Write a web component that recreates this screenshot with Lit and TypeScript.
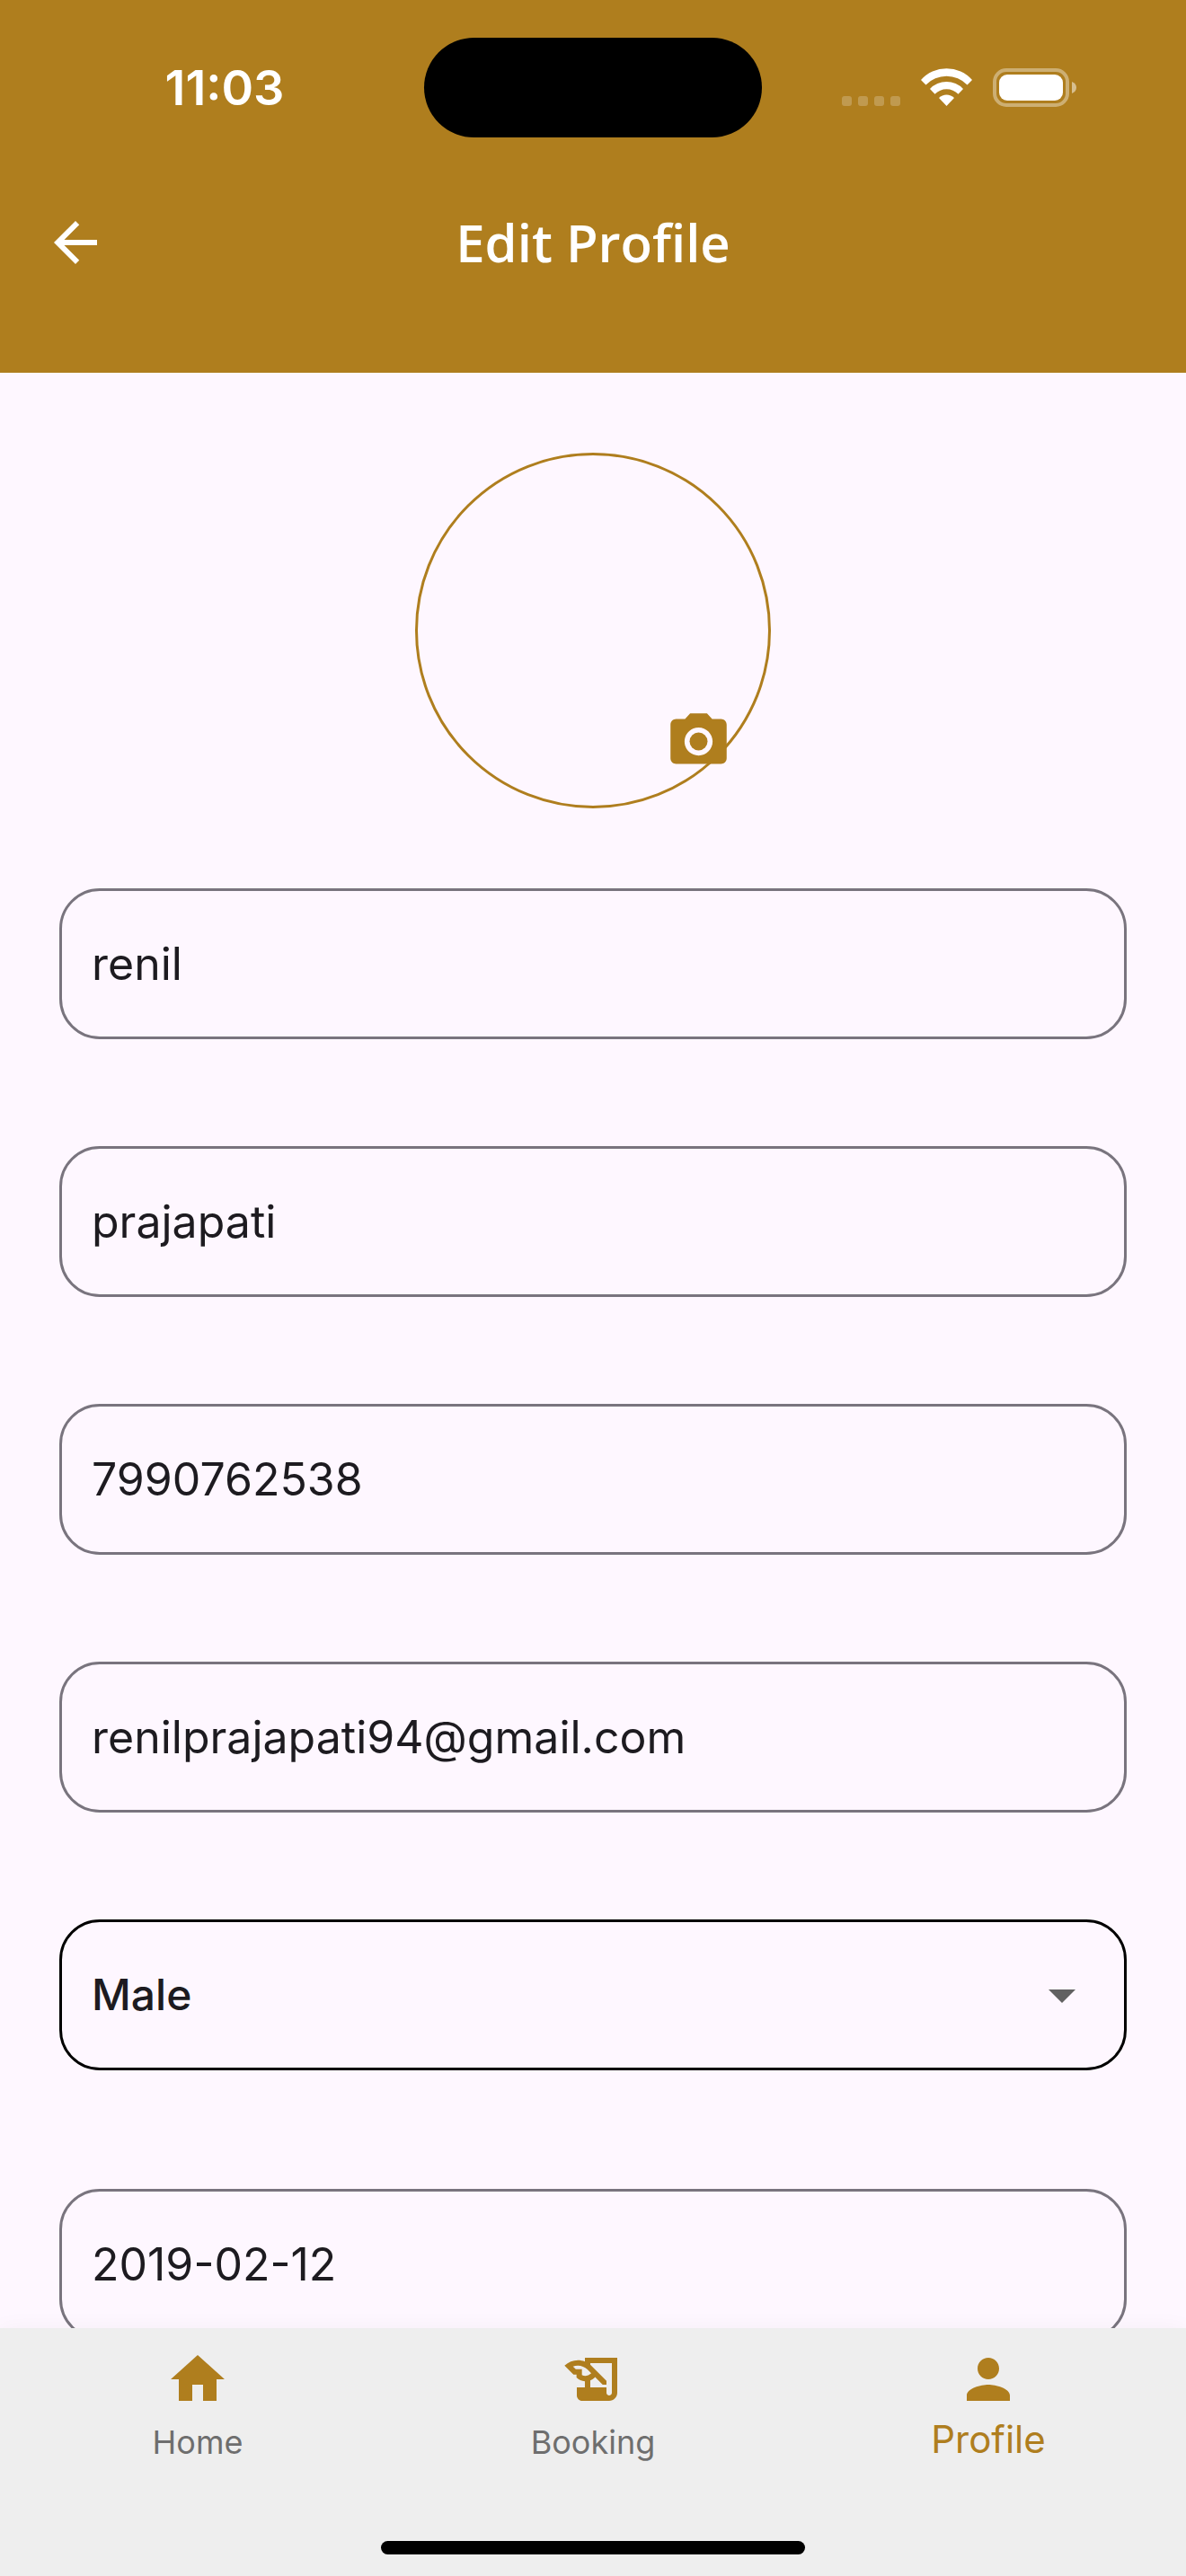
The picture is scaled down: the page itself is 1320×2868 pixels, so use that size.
import { LitElement, html, css, svg, nothing } from "lit";
import { customElement, property, state } from "lit/decorators.js";
import { classMap } from "lit/directives/class-map.js";

const ICONS = {
  back: svg`<path d="M20 11H7.83l5.59-5.59L12 4l-8 8 8 8 1.41-1.41L7.83 13H20v-2z"/>`,
  camera: svg`<circle cx="12" cy="12" r="3.2"/><path d="M9 2L7.17 4H4c-1.1 0-2 .9-2 2v12c0 1.1.9 2 2 2h16c1.1 0 2-.9 2-2V6c0-1.1-.9-2-2-2h-3.17L15 2H9zm3 15c-2.76 0-5-2.24-5-5s2.24-5 5-5 5 2.24 5 5-2.24 5-5 5z"/>`,
  down: svg`<path d="M7 10l5 5 5-5z"/>`,
  home: svg`<path d="M10 20v-6h4v6h5v-8h3L12 3 2 12h3v8z"/>`,
  booking: svg`<path d="M9 4v1.38c-.83-.33-1.72-.5-2.61-.5-1.79 0-3.58.68-4.95 2.05l3.33 3.33h1.11v1.11c.86.86 1.98 1.31 3.11 1.36V15H6v3c0 1.1.9 2 2 2h10c1.66 0 3-1.34 3-3V4H9zm-1.11 6.41V8.26H5.61L4.57 7.22a5.07 5.07 0 0 1 1.82-.34c1.34 0 2.59.52 3.54 1.46l1.41 1.41-.2.2a2.7 2.7 0 0 1-1.92.8c-.47 0-.93-.12-1.33-.34zM19 17c0 .55-.45 1-1 1s-1-.45-1-1v-2h-6v-2.59c.57-.23 1.1-.57 1.56-1.03l.2-.2L15.59 14H17v-1.41l-6-5.97V6h8v11z"/>`,
  profile: svg`<path d="M12 12c2.21 0 4-1.79 4-4s-1.79-4-4-4-4 1.79-4 4 1.79 4 4 4zm0 2c-2.67 0-8 1.34-8 4v2h16v-2c0-2.66-5.33-4-8-4z"/>`,
};

type IconName = keyof typeof ICONS;

const icon = (name: IconName) =>
  html`<svg class="icon" viewBox="0 0 24 24" aria-hidden="true">${ICONS[name]}</svg>`;

@customElement("status-bar")
export class StatusBar extends LitElement {
  @property() time = "";

  static styles = css`
    :host {
      display: grid;
      grid-template-columns: 1fr 376px 1fr;
      align-items: center;
      padding-top: 42px;
    }
    .time {
      padding-left: 28px;
      text-align: center;
      font-size: 54px;
      font-weight: 600;
      line-height: 64px;
    }
    .island {
      height: 111px;
      border-radius: 56px;
      background: #000;
    }
    .signals {
      display: flex;
      justify-content: flex-end;
      gap: 23px;
      padding-right: 122px;
    }
    .signals svg {
      display: block;
      fill: #fff;
    }
  `;

  render() {
    return html`
      <time class="time">${this.time}</time>
      <div class="island"></div>
      <div class="signals">
        <svg width="65" height="43" viewBox="0 0 65 43" aria-hidden="true">
          <g opacity="0.22">
            ${[0, 18, 36, 54].map((x) => svg`<rect x=${x} y="31" width="11" height="11" rx="3"/>`)}
          </g>
        </svg>
        <svg width="57" height="43" viewBox="0 0 57 43" aria-hidden="true">
          <path d="M0 13A38 38 0 0 1 57 13L51.5 18.5A32 32 0 0 0 5.5 18.5Z"/>
          <path d="M10 23A25.5 25.5 0 0 1 47 23L41.5 28.7A18.5 18.5 0 0 0 15.5 28.7Z"/>
          <path d="M20 33A12 12 0 0 1 37 33L28.5 42Z"/>
        </svg>
        <svg width="93" height="43" viewBox="0 0 93 43" aria-hidden="true">
          <rect x="2" y="2" width="81" height="39" rx="13" fill="none" stroke="#fff" stroke-width="4" opacity="0.38"/>
          <rect x="7" y="7" width="71" height="29" rx="9"/>
          <path d="M88 15c3.500 1.200 5 3.800 5 6.500s-1.500 5.300-5 6.500z" opacity="0.5"/>
        </svg>
      </div>
    `;
  }
}

interface Field {
  name: string;
  label: string;
  value: string;
  type?: string;
  options?: string[];
}

const FIELDS: Field[] = [
  { name: "first", label: "First name", value: "renil" },
  { name: "last", label: "Last name", value: "prajapati" },
  { name: "phone", label: "Phone number", value: "7990762538", type: "tel" },
  { name: "email", label: "Email", value: "renilprajapati94@gmail.com", type: "email" },
  { name: "gender", label: "Gender", value: "Male", options: ["Male", "Female", "Other"] },
  { name: "birth", label: "Date of birth", value: "2019-02-12" },
];

const TABS: { id: IconName; label: string }[] = [
  { id: "home", label: "Home" },
  { id: "booking", label: "Booking" },
  { id: "profile", label: "Profile" },
];

@customElement("app-root")
export class AppRoot extends LitElement {
  @state() private tab: IconName = "profile";

  static styles = css`
    :host {
      --gold: #af7e1e;
      --surface: #fef7ff;
      --ink: #1d1b20;
      display: flex;
      flex-direction: column;
      height: 100vh;
      background: var(--surface);
      color: var(--ink);
      font-family: Inter, "Liberation Sans", sans-serif;
    }
    * {
      box-sizing: border-box;
    }
    button {
      padding: 0;
      border: 0;
      background: none;
      color: inherit;
      cursor: pointer;
    }
    .icon {
      display: block;
      width: 72px;
      height: 72px;
      fill: currentColor;
    }
    .header {
      flex: none;
      background: var(--gold);
      color: #fff;
    }
    .toolbar {
      display: grid;
      grid-template-columns: 72px 1fr 72px;
      align-items: center;
      padding: 81px 48px 109px;
    }
    .title {
      margin: 0;
      text-align: center;
      font-family: "Open Sans", sans-serif;
      font-size: 58px;
      font-weight: 600;
      line-height: 72px;
    }
    .content {
      flex: 1;
      min-height: 0;
      overflow-y: auto;
      scrollbar-width: none;
      padding: 89px 66px;
    }
    .avatar {
      position: relative;
      width: 396px;
      height: 396px;
      margin: 0 auto 89px;
      border: 3px solid var(--gold);
      border-radius: 50%;
    }
    .camera {
      position: absolute;
      right: 40px;
      bottom: 34px;
      color: var(--gold);
    }
    .camera .icon {
      width: 75px;
      height: 75px;
    }
    .form {
      display: flex;
      flex-direction: column;
      gap: 119px;
    }
    .field {
      display: grid;
      align-items: center;
    }
    .control {
      grid-area: 1 / 1;
      width: 100%;
      height: 168px;
      margin: 0;
      padding: 0 33px;
      border: 3px solid #79747e;
      border-radius: 45px;
      outline: none;
      background: transparent;
      color: inherit;
      font-family: inherit;
      font-size: 50px;
      font-weight: 400;
      line-height: 72px;
    }
    .choice {
      margin-bottom: 13px;
    }
    .choice .control {
      appearance: none;
      border-color: #000;
      font-size: 48px;
      font-weight: 500;
    }
    .choice .icon {
      grid-area: 1 / 1;
      justify-self: end;
      margin-right: 36px;
      color: #616161;
      pointer-events: none;
    }
    .footer {
      position: relative;
      flex: none;
      padding: 21px 0 24px;
      background: #eee;
      box-shadow: 0 0 24px rgba(0, 0, 0, 0.04);
    }
    .tabs {
      display: grid;
      grid-template-columns: repeat(3, 1fr);
      margin-bottom: 84px;
    }
    .tab {
      display: flex;
      flex-direction: column;
      align-items: center;
      gap: 9px;
      color: #6e6e6e;
      font-family: inherit;
      font-size: 36px;
      line-height: 51px;
    }
    .tab .icon {
      color: var(--gold);
    }
    .active {
      gap: 5px;
      color: var(--gold);
      font-size: 42px;
    }
    .indicator {
      width: 472px;
      height: 15px;
      margin: 0 auto;
      border-radius: 8px;
      background: #000;
    }
  `;

  private renderField(f: Field) {
    if (f.options) {
      return html`
        <div class="field choice">
          <select class="control" name=${f.name} aria-label=${f.label}>
            ${f.options.map((o) => html`<option ?selected=${o === f.value}>${o}</option>`)}
          </select>
          ${icon("down")}
        </div>
      `;
    }
    return html`
      <div class="field">
        <input class="control" name=${f.name} type=${f.type ?? "text"} aria-label=${f.label} .value=${f.value} />
      </div>
    `;
  }

  render() {
    return html`
      <header class="header">
        <status-bar time="11:03"></status-bar>
        <div class="toolbar">
          <button type="button" aria-label="Back">${icon("back")}</button>
          <h1 class="title">Edit Profile</h1>
        </div>
      </header>
      <main class="content">
        <div class="avatar">
          <button class="camera" type="button" aria-label="Change photo">${icon("camera")}</button>
        </div>
        <form class="form">${FIELDS.map((f) => this.renderField(f))}</form>
      </main>
      <footer class="footer">
        <nav class="tabs">
          ${TABS.map(
            (t) => html`
              <button
                type="button"
                class=${classMap({ tab: true, active: t.id === this.tab })}
                aria-current=${t.id === this.tab ? "page" : nothing}
                @click=${() => (this.tab = t.id)}
              >
                ${icon(t.id)}
                <span>${t.label}</span>
              </button>
            `
          )}
        </nav>
        <div class="indicator"></div>
      </footer>
    `;
  }
}
